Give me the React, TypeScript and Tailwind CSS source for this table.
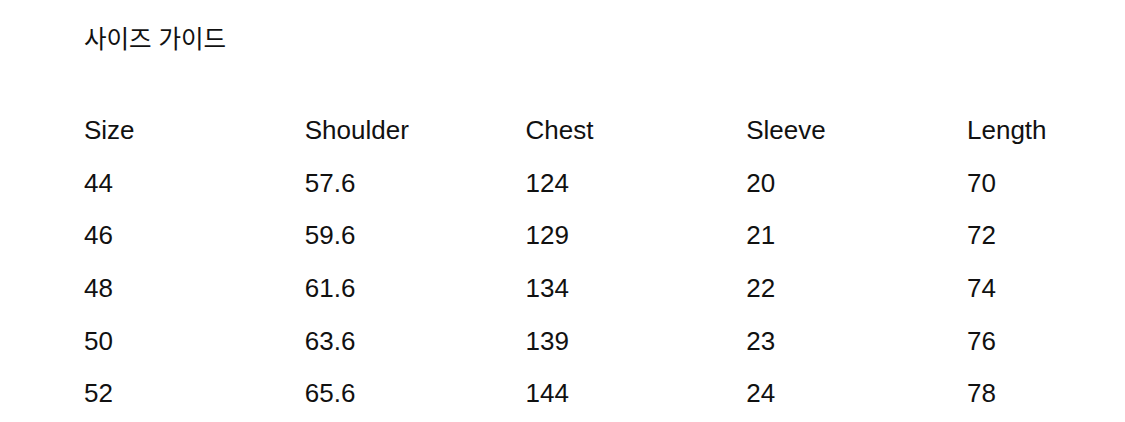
import React from 'react';

const headers = ['Size', 'Shoulder', 'Chest', 'Sleeve', 'Length'];

const rows: string[][] = [
  ['44', '57.6', '124', '20', '70'],
  ['46', '59.6', '129', '21', '72'],
  ['48', '61.6', '134', '22', '74'],
  ['50', '63.6', '139', '23', '76'],
  ['52', '65.6', '144', '24', '78'],
];

const Row: React.FC<{ cells: string[] }> = ({ cells }) => (
  <div className="grid grid-cols-[repeat(5,220.75px)] h-[52.6px] items-center">
    {cells.map((c, i) => (
      <div key={i} className="whitespace-nowrap">
        {c}
      </div>
    ))}
  </div>
);

const App: React.FC = () => {
  return (
    <div
      className="w-[1125px] h-[422px] overflow-hidden bg-white text-[#111] pl-[84px] pt-[24px]"
      style={{ fontFamily: '"Liberation Sans", Arial, "Noto Sans CJK KR", sans-serif' }}
    >
      <h1 className="text-[24.5px] leading-[32px] font-normal">사이즈 가이드</h1>
      <div className="mt-[48px] text-[26px] leading-[30px]">
        <Row cells={headers} />
        {rows.map((r) => (
          <Row key={r[0]} cells={r} />
        ))}
      </div>
    </div>
  );
};

export default App;
